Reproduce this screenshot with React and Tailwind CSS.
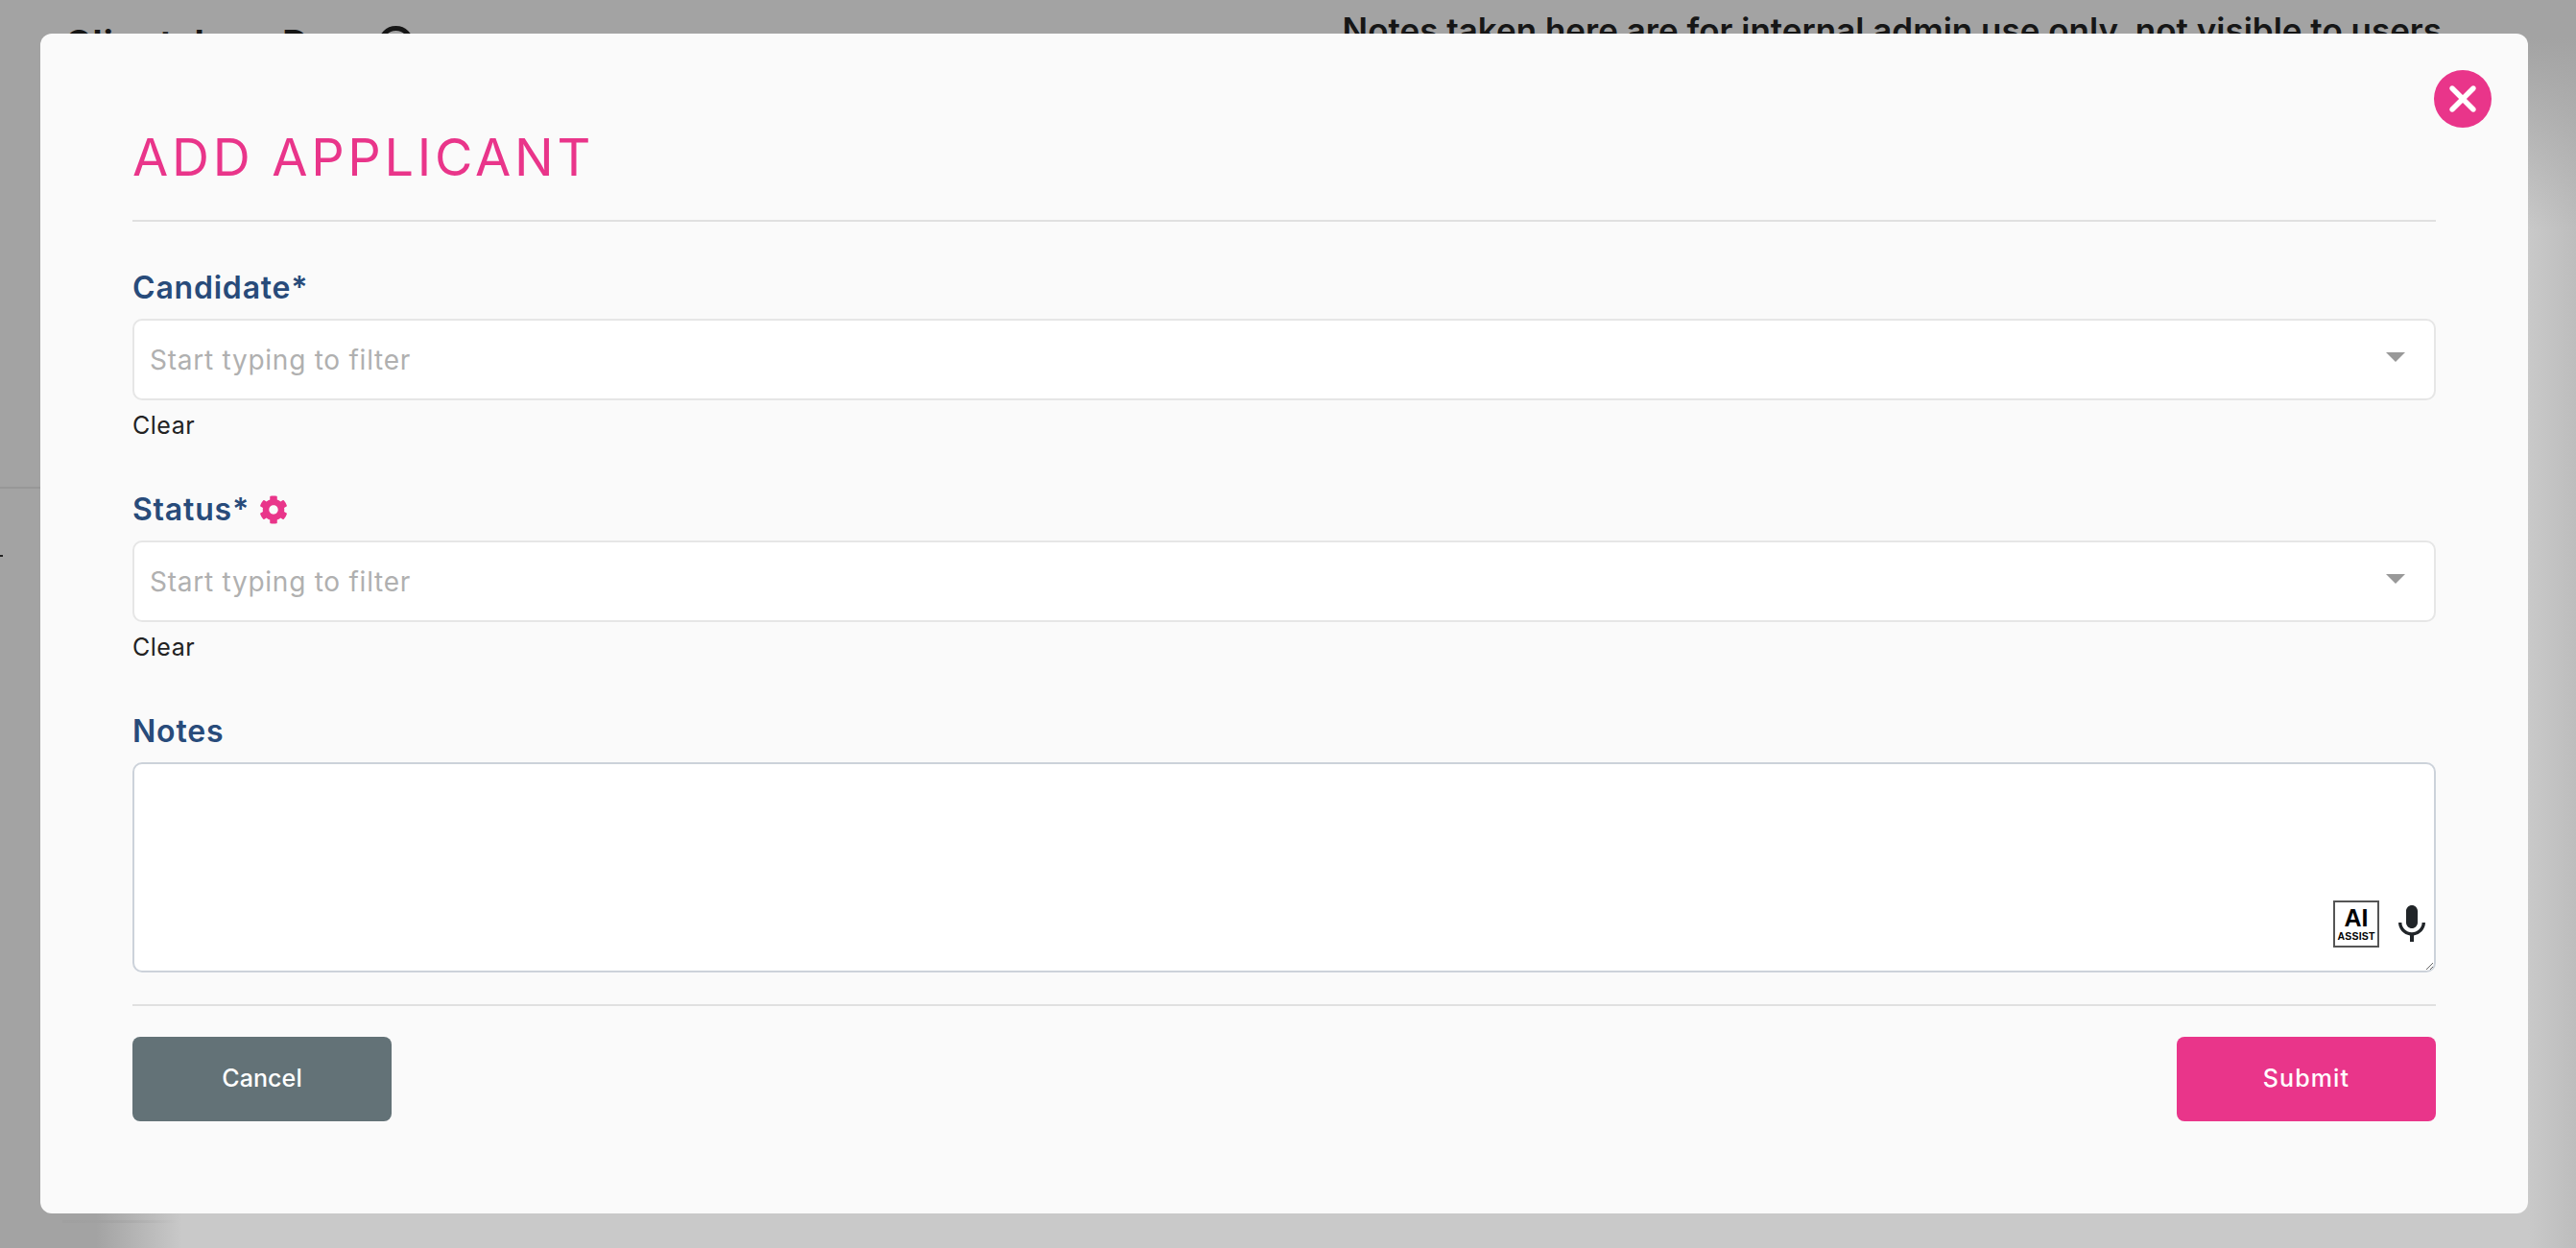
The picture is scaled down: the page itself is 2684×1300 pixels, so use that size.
import React from 'react';
import { FaCog } from 'react-icons/fa';
import { MdMic } from 'react-icons/md';
import { FaXmark } from 'react-icons/fa6';

const SelectField = ({ label, icon }) => (
    <div className="flex flex-col">
        <label className="flex items-center gap-[10px] h-[33px] text-[32px] font-semibold tracking-[0.8px] text-[#284b7a]">
            {label}
            {icon}
        </label>
        <div className="relative mt-[16px]">
            <input
                placeholder="Start typing to filter"
                className="w-full h-[85px] rounded-[10px] border-2 border-[#e6e6e6] bg-white pl-[16px] pr-[60px] text-[28px] tracking-[0.75px] outline-none placeholder:text-[#b0b0b0]"
            />
            <span className="absolute right-[32px] top-[35px] w-0 h-0 border-x-[10px] border-x-transparent border-t-[10px] border-t-[#999999]" />
        </div>
        <span className="mt-[12px] h-[28px] text-[25px] leading-[28px] tracking-[0.5px] text-[#222222]">Clear</span>
    </div>
);

const App = () => {
    return (
        <div className="relative w-full h-[1300px] overflow-hidden font-['Inter','Liberation_Sans',sans-serif] bg-[linear-gradient(to_right,#a3a3a3_100px,transparent_190px),linear-gradient(to_bottom,#a3a3a3_40px,transparent_240px),linear-gradient(to_left,#bdbdbd,#c9c9c9_50px)]">
            {/* page behind the overlay */}
            <div className="flex justify-between items-start h-[60px] pl-[68px] pr-[140px]">
                <div className="flex items-center gap-[25px] mt-[20px] h-[50px] text-[37px] font-bold tracking-[1.2px] text-[#161616]">
                    Client Jane Doe
                    <span className="w-[37px] h-[37px] rounded-full border-[5px] border-[#161616]" />
                </div>
                <div className="mt-[5px] h-[50px] text-[35px] font-semibold text-[#161616]">
                    Notes taken here are for internal admin use only, not visible to users
                </div>
            </div>
            <div className="mt-[447px] w-[200px] h-[2px] bg-[#979797]" />
            <div className="mt-[69px] w-[3px] h-[2px] bg-[#222222]" />
            <div className="absolute left-[65px] top-[1271px] w-[120px] h-[3px] bg-gradient-to-r from-[#a0a0a0] to-transparent" />

            <div className="absolute left-[42px] top-[35px] w-[2592px] h-[1229px] rounded-[12px] bg-[#fafafa] px-[96px] pt-[96px]">
                <button className="absolute right-[38px] top-[38px] w-[60px] h-[60px] rounded-full bg-[#e9358a] flex items-center justify-center text-white">
                    <FaXmark size={44} />
                </button>

                <h1 className="h-[100px] text-[54px] leading-[66px] font-normal tracking-[3.7px] text-[#e9358a] border-b-2 border-[#e0e0e0]">
                    ADD APPLICANT
                </h1>

                <div className="mt-[52px] flex flex-col gap-[57px]">
                    <SelectField label="Candidate*" />
                    <SelectField label="Status*" icon={<FaCog size={30} className="text-[#e9358a]" />} />
                    <div className="flex flex-col">
                        <label className="flex items-center h-[33px] text-[32px] font-semibold tracking-[0.8px] text-[#284b7a]">Notes</label>
                        <div className="relative mt-[16px]">
                            <textarea className="block w-full h-[219px] rounded-[10px] border-2 border-[#ccd2da] bg-white outline-none resize-y" />
                            <div className="absolute right-[1px] bottom-[26px] flex items-center gap-[10px]">
                                <div className="flex flex-col items-center w-[48px] h-[49px] border-2 border-[#555555] bg-white font-['Liberation_Sans',sans-serif] font-bold text-black">
                                    <span className="text-[25px] leading-[26px] mt-[3px]">AI</span>
                                    <span className="text-[10.5px] leading-[12px] tracking-[0.2px]">ASSIST</span>
                                </div>
                                <MdMic size={48} className="text-[#212529]" />
                            </div>
                        </div>
                    </div>
                </div>

                <div className="mt-[33px] pt-[32px] border-t-2 border-[#e0e0e0] flex justify-between">
                    <button className="w-[270px] h-[88px] rounded-[8px] bg-[#637277] text-[25px] font-medium tracking-[0.1px] text-white">Cancel</button>
                    <button className="w-[270px] h-[88px] rounded-[8px] bg-[#e9358a] text-[25px] font-medium tracking-[1.1px] text-white">Submit</button>
                </div>
            </div>
        </div>
    );
};

export default App;
